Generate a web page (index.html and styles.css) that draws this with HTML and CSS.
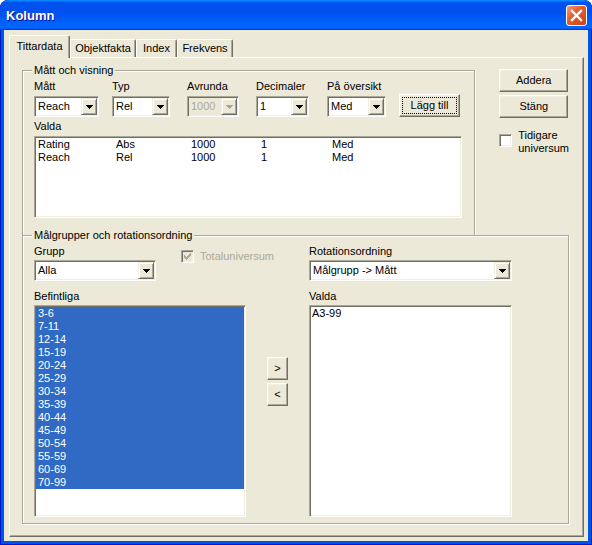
FILE: index.html
```html
<!DOCTYPE html>
<html lang="sv">
<head>
    <meta charset="UTF-8">
    <title>Kolumn</title>
    <link rel="stylesheet" href="styles.css">
</head>
<body>
<div class="window">
    <div class="titlebar">
        <span class="title">Kolumn</span>
        <span class="close">
            <svg width="19" height="19" viewBox="0 0 19 19"><path d="M5 5l9 9M14 5l-9 9" stroke="#fff" stroke-width="2.3" stroke-linecap="square"/></svg>
        </span>
    </div>
    <div class="client">
        <div class="tabs">
            <div class="tab active tab-1">Tittardata</div>
            <div class="tab tab-2">Objektfakta</div>
            <div class="tab tab-3">Index</div>
            <div class="tab tab-4">Frekvens</div>
        </div>
        <div class="panel">
            <div class="top-row">
                <fieldset class="group group-view">
                    <legend>Mått och visning</legend>
                    <div class="fields">
                        <div class="field f1">
                            <div class="label">Mått</div>
                            <div class="combo" style="width: 65px"><span class="combo-text">Reach</span><span class="drop"><svg width="7" height="4" viewBox="0 0 7 4"><path d="M0 0h7v1h-1v1h-1v1h-1v1h-1v-1h-1v-1h-1v-1h-1z"/></svg></span></div>
                        </div>
                        <div class="field f2">
                            <div class="label">Typ</div>
                            <div class="combo" style="width: 58px"><span class="combo-text">Rel</span><span class="drop"><svg width="7" height="4" viewBox="0 0 7 4"><path d="M0 0h7v1h-1v1h-1v1h-1v1h-1v-1h-1v-1h-1v-1h-1z"/></svg></span></div>
                        </div>
                        <div class="field f3">
                            <div class="label">Avrunda</div>
                            <div class="combo disabled" style="width: 52px"><span class="combo-text">1000</span><span class="drop"><svg width="7" height="4" viewBox="0 0 7 4"><path d="M0 0h7v1h-1v1h-1v1h-1v1h-1v-1h-1v-1h-1v-1h-1z"/></svg></span></div>
                        </div>
                        <div class="field f4">
                            <div class="label">Decimaler</div>
                            <div class="combo" style="width: 53px"><span class="combo-text">1</span><span class="drop"><svg width="7" height="4" viewBox="0 0 7 4"><path d="M0 0h7v1h-1v1h-1v1h-1v1h-1v-1h-1v-1h-1v-1h-1z"/></svg></span></div>
                        </div>
                        <div class="field f5">
                            <div class="label">På översikt</div>
                            <div class="combo" style="width: 59px"><span class="combo-text">Med</span><span class="drop"><svg width="7" height="4" viewBox="0 0 7 4"><path d="M0 0h7v1h-1v1h-1v1h-1v1h-1v-1h-1v-1h-1v-1h-1z"/></svg></span></div>
                        </div>
                        <button class="btn btn-focus btn-add">Lägg till</button>
                    </div>
                    <div class="label label-list">Valda</div>
                    <div class="listbox list-chosen">
                        <div class="item cols"><span>Rating</span><span>Abs</span><span>1000</span><span>1</span><span>Med</span></div>
                        <div class="item cols"><span>Reach</span><span>Rel</span><span>1000</span><span>1</span><span>Med</span></div>
                    </div>
                </fieldset>
                <div class="side">
                    <button class="btn btn-side">Addera</button>
                    <button class="btn btn-side">Stäng</button>
                    <div class="check-row">
                        <span class="check"></span>
                        <span>Tidigare<br>universum</span>
                    </div>
                </div>
            </div>
            <fieldset class="group group-target">
                <legend>Målgrupper och rotationsordning</legend>
                <div class="target-grid">
                    <div class="cell-group">
                        <div class="field">
                            <div class="label">Grupp</div>
                            <div class="combo" style="width: 122px"><span class="combo-text">Alla</span><span class="drop"><svg width="7" height="4" viewBox="0 0 7 4"><path d="M0 0h7v1h-1v1h-1v1h-1v1h-1v-1h-1v-1h-1v-1h-1z"/></svg></span></div>
                        </div>
                        <div class="check-inline disabled">
                            <span class="check"><svg width="11" height="11" viewBox="0 0 11 11"><path d="M2 4h1v3h-1zM3 5h1v3h-1zM4 6h1v3h-1zM5 5h1v3h-1zM6 4h1v3h-1zM7 3h1v3h-1zM8 2h1v3h-1z"/></svg></span>
                            <span>Totaluniversum</span>
                        </div>
                    </div>
                    <div></div>
                    <div class="field">
                        <div class="label">Rotationsordning</div>
                        <div class="combo" style="width: 203px"><span class="combo-text">Målgrupp -&gt; Mått</span><span class="drop"><svg width="7" height="4" viewBox="0 0 7 4"><path d="M0 0h7v1h-1v1h-1v1h-1v1h-1v-1h-1v-1h-1v-1h-1z"/></svg></span></div>
                    </div>

                    <div class="field">
                        <div class="label">Befintliga</div>
                        <div class="listbox list-available">
                            <div class="item selected">3-6</div>
                            <div class="item selected">7-11</div>
                            <div class="item selected">12-14</div>
                            <div class="item selected">15-19</div>
                            <div class="item selected">20-24</div>
                            <div class="item selected">25-29</div>
                            <div class="item selected">30-34</div>
                            <div class="item selected">35-39</div>
                            <div class="item selected">40-44</div>
                            <div class="item selected">45-49</div>
                            <div class="item selected">50-54</div>
                            <div class="item selected">55-59</div>
                            <div class="item selected">60-69</div>
                            <div class="item selected">70-99</div>
                        </div>
                    </div>
                    <div class="move-buttons">
                        <button class="btn btn-move">&gt;</button>
                        <button class="btn btn-move">&lt;</button>
                    </div>
                    <div class="field">
                        <div class="label">Valda</div>
                        <div class="listbox list-target">
                            <div class="item">A3-99</div>
                        </div>
                    </div>
                </div>
            </fieldset>
        </div>
    </div>
</div>
</body>
</html>
```

FILE: styles.css
```css
* {
    box-sizing: border-box;
}
body {
    margin: 0;
    font-family: "Liberation Sans", Arial, sans-serif;
    font-size: 11px;
    line-height: 13px;
    color: #000;
}
.window {
    width: 592px;
    height: 545px;
    display: flex;
    flex-direction: column;
    background: #0054e3;
    border-radius: 8px 8px 0 0;
    box-shadow: inset 0 0 0 1px #0019cf;
    overflow: hidden;
}
.titlebar {
    height: 30px;
    flex: none;
    display: flex;
    align-items: center;
    padding: 1px 5px 0 6px;
    border-radius: 8px 8px 0 0;
    background: linear-gradient(to bottom, #0997ff 0%, #0053ee 8%, #0050ee 40%, #0066ff 88%, #0066ff 93%, #005bff 95%, #003dd7 96%, #003dd7 100%);
}
.title {
    flex: 1;
    color: #fff;
    font-weight: bold;
    font-size: 13px;
    text-shadow: 1px 1px #0f1089;
}
.close {
    width: 21px;
    height: 21px;
    margin-top: -1px;
    border: 1px solid #fff;
    border-radius: 3px;
    background: linear-gradient(135deg, #f39a80 0%, #e2602f 40%, #cc4317 100%);
    display: flex;
}
.client {
    flex: 1;
    margin: 0 4px 4px;
    padding: 5px 4px 4px 5px;
    background: #ece9d8;
    display: flex;
    flex-direction: column;
}

/* tabs */
.tabs {
    height: 22px;
    display: flex;
    align-items: flex-end;
}
.tab {
    height: 18px;
    padding-top: 2px;
    text-align: center;
    background: #ece9d8;
    border: 1px solid;
    border-bottom: none;
    border-color: #fff #716f64 #716f64 #fff;
    border-radius: 2px 2px 0 0;
    box-shadow: inset -1px 0 0 #aca899;
}
.tab.active {
    height: 23px;
    margin-bottom: -1px;
    padding-top: 4px;
    position: relative;
    z-index: 1;
}
.tab-1 { width: 61px; }
.tab-2 { width: 66px; }
.tab-3 { width: 41px; }
.tab-4 { width: 56px; }
.panel {
    flex: 1;
    display: flex;
    flex-direction: column;
    padding: 6px 14px 12px 12px;
    border: 1px solid;
    border-color: #fff #716f64 #716f64 #fff;
    box-shadow: inset -1px -1px 0 #aca899;
}

/* group boxes */
.group {
    margin: 0;
    min-width: 0;
    border: 1px solid #aca899;
    box-shadow: inset 1px 1px 0 #fff, 1px 1px 0 #fff;
}
.group legend {
    padding: 0 2px;
    margin-left: -2px;
    line-height: 13px;
    background: #ece9d8;
}
.top-row {
    display: flex;
}
.group-view {
    width: 455px;
    padding: 3px 14px 17px 11px;
    border-bottom: none;
}
.fields {
    display: flex;
    align-items: flex-end;
}
.field .label {
    margin-bottom: 3px;
    white-space: nowrap;
}
.f1 { width: 78px; }
.f2 { width: 75px; }
.f3 { width: 69px; }
.f4 { width: 71px; }
.f5 { width: 72px; }
.btn-add {
    width: 61px;
}
.label-list {
    margin-top: 3px;
    margin-bottom: 3px;
}
.side {
    margin-left: 24px;
    padding-top: 5px;
    display: flex;
    flex-direction: column;
    gap: 3px;
}
.btn-side {
    width: 69px;
}
.check-row {
    margin-top: 8px;
    display: flex;
    align-items: flex-start;
    gap: 6px;
}
.check-row .check {
    margin-top: 5px;
}
.group-target {
    flex: 1;
    width: 547px;
    margin-top: -6px;
    padding: 3px 14px 6px 11px;
}
.target-grid {
    display: grid;
    grid-template-columns: 212px 63px 203px;
    row-gap: 9px;
}
.target-grid .field .label {
    margin-bottom: 2px;
}
.cell-group {
    display: flex;
    align-items: flex-start;
}
.check-inline {
    margin: 5px 0 0 25px;
    display: flex;
    align-items: center;
    gap: 6px;
}
.check-inline.disabled {
    color: #aca899;
}
.move-buttons {
    padding: 67px 0 0 21px;
    display: flex;
    flex-direction: column;
    align-items: flex-start;
    gap: 3px;
}
.btn-move {
    width: 21px;
}

/* controls */
.combo {
    height: 21px;
    display: flex;
    background: #fff;
    border: 1px solid;
    border-color: #aca899 #fff #fff #aca899;
    box-shadow: inset 1px 1px 0 #716f64, inset -1px -1px 0 #f1efe2;
}
.combo-text {
    flex: 1;
    padding-left: 3px;
    line-height: 19px;
    white-space: nowrap;
    overflow: hidden;
}
.drop {
    width: 16px;
    margin: 1px 1px 1px 0;
    display: flex;
    align-items: center;
    justify-content: center;
    background: #ece9d8;
    border: 1px solid;
    border-color: #f1efe2 #716f64 #716f64 #f1efe2;
    box-shadow: inset 1px 1px 0 #fff, inset -1px -1px 0 #aca899;
}
.drop svg {
    fill: #000;
}
.combo.disabled {
    background: #ece9d8;
    color: #aca899;
}
.combo.disabled .drop svg {
    fill: #aca899;
}
.btn {
    height: 23px;
    padding: 0;
    font: inherit;
    line-height: 13px;
    color: #000;
    background: #ece9d8;
    border: 1px solid;
    border-color: #fff #716f64 #716f64 #fff;
    box-shadow: inset -1px -1px 0 #aca899, inset 1px 1px 0 #f1efe2;
}
.btn-focus {
    outline: 1px dotted #000;
    outline-offset: -4px;
}
.check {
    width: 13px;
    height: 13px;
    flex: none;
    background: #fff;
    border: 1px solid;
    border-color: #aca899 #fff #fff #aca899;
    box-shadow: inset 1px 1px 0 #716f64, inset -1px -1px 0 #f1efe2;
}
.check svg {
    display: block;
    fill: #000;
}
.check-inline.disabled .check {
    background: #ece9d8;
}
.check-inline.disabled .check svg {
    fill: #aca899;
}
.listbox {
    padding: 1px;
    overflow: hidden;
    background: #fff;
    border: 1px solid;
    border-color: #aca899 #fff #fff #aca899;
    box-shadow: inset 1px 1px 0 #716f64, inset -1px -1px 0 #f1efe2;
}
.item {
    height: 13px;
    padding-left: 2px;
    white-space: nowrap;
}
.item.selected {
    background: #316ac5;
    color: #fff;
}
.list-chosen {
    width: 428px;
    height: 82px;
}
.cols {
    display: flex;
}
.cols span:nth-child(1) { width: 78px; }
.cols span:nth-child(2) { width: 75px; }
.cols span:nth-child(3) { width: 70px; }
.cols span:nth-child(4) { width: 71px; }
.list-available {
    width: 212px;
    height: 212px;
}
.list-target {
    width: 203px;
    height: 212px;
}
.list-target .item {
    padding-left: 1px;
}
```
